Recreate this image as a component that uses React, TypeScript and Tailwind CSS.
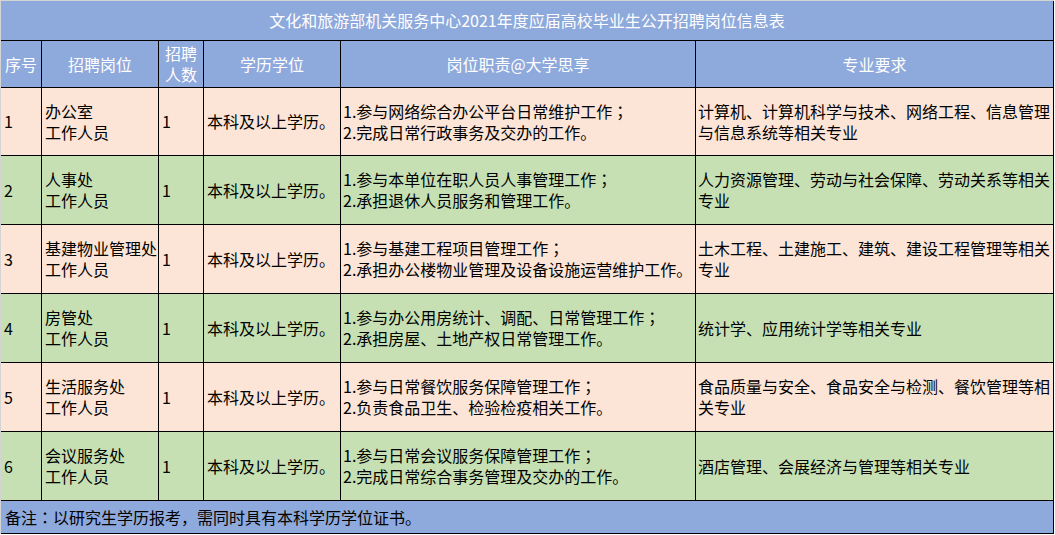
const rows = [
    {
        no: '1',
        post: ['办公室', '工作人员'],
        duty: ['1.参与网络综合办公平台日常维护工作', '2.完成日常行政事务及交办的工作。'],
        major: '计算机、计算机科学与技术、网络工程、信息管理与信息系统等相关专业',
    },
    {
        no: '2',
        post: ['人事处', '工作人员'],
        duty: ['1.参与本单位在职人员人事管理工作', '2.承担退休人员服务和管理工作。'],
        major: '人力资源管理、劳动与社会保障、劳动关系等相关专业',
    },
    {
        no: '3',
        post: ['基建物业管理处', '工作人员'],
        duty: ['1.参与基建工程项目管理工作', '2.承担办公楼物业管理及设备设施运营维护工作。'],
        major: '土木工程、土建施工、建筑、建设工程管理等相关专业',
    },
    {
        no: '4',
        post: ['房管处', '工作人员'],
        duty: ['1.参与办公用房统计、调配、日常管理工作', '2.承担房屋、土地产权日常管理工作。'],
        major: '统计学、应用统计学等相关专业',
    },
    {
        no: '5',
        post: ['生活服务处', '工作人员'],
        duty: ['1.参与日常餐饮服务保障管理工作', '2.负责食品卫生、检验检疫相关工作。'],
        major: '食品质量与安全、食品安全与检测、餐饮管理等相关专业',
    },
    {
        no: '6',
        post: ['会议服务处', '工作人员'],
        duty: ['1.参与日常会议服务保障管理工作', '2.完成日常综合事务管理及交办的工作。'],
        major: '酒店管理、会展经济与管理等相关专业',
    },
];

const cols = 'grid grid-cols-[41px_117px_45px_137px_355px_358px]';
const cell = 'flex items-center border-r border-b border-black';

// full-width punctuation centred in its box, as in the sheet
const Punct = ({ ch }: { ch: string }) => (
    <span style={{ fontFamily: '"Noto Sans CJK JP", sans-serif' }}>{ch}</span>
);

const App = () => {
    return (
        <div
            className="w-[1055px] bg-white text-[16px] leading-[21px] text-black"
            style={{ fontFamily: '"Noto Sans CJK SC", "Noto Sans", sans-serif' }}
        >
            <div className="w-[1054px] border-t border-l border-[#d4d4d4]">
                {/* Title */}
                <div className="flex h-[40px] items-center justify-center border-r border-b border-black bg-[#8ea9db] text-white">
                    文化和旅游部机关服务中心2021年度应届高校毕业生公开招聘岗位信息表
                </div>

                {/* Header row */}
                <div className={`${cols} h-[47px] bg-[#8ea9db] text-white`}>
                    <div className={`${cell} justify-center`}>序号</div>
                    <div className={`${cell} justify-center`}>招聘岗位</div>
                    <div className={`${cell} justify-center text-center`}>
                        招聘
                        <br />
                        人数
                    </div>
                    <div className={`${cell} justify-center`}>学历学位</div>
                    <div className={`${cell} justify-center`}>岗位职责@大学思享</div>
                    <div className={`${cell} justify-center`}>专业要求</div>
                </div>

                {/* Data rows */}
                {rows.map((r, i) => (
                    <div
                        key={r.no}
                        className={`${cols} ${i === 0 ? 'h-[68px]' : 'h-[69px]'} ${
                            i % 2 === 0 ? 'bg-[#fce4d6]' : 'bg-[#c6e0b4]'
                        }`}
                    >
                        <div className={`${cell} pl-[3px]`}>{r.no}</div>
                        <div className={`${cell} pl-[3px] whitespace-nowrap`}>
                            <div>
                                {r.post[0]}
                                <br />
                                {r.post[1]}
                            </div>
                        </div>
                        <div className={`${cell} pl-[3px]`}>1</div>
                        <div className={`${cell} pl-[3px] whitespace-nowrap`}>本科及以上学历。</div>
                        <div className={`${cell} pl-[2px] whitespace-nowrap`}>
                            <div>
                                {r.duty[0]}
                                <Punct ch="；" />
                                <br />
                                {r.duty[1]}
                            </div>
                        </div>
                        <div className={`${cell} pl-[2px] pr-[1px]`}>
                            <div>{r.major}</div>
                        </div>
                    </div>
                ))}

                {/* Note */}
                <div className="flex h-[33px] items-center border-r border-b border-black bg-[#8ea9db] pl-[4px]">
                    备注<Punct ch="：" />以研究生学历报考<Punct ch="，" />需同时具有本科学历学位证书。
                </div>
            </div>
        </div>
    );
};

export default App;
